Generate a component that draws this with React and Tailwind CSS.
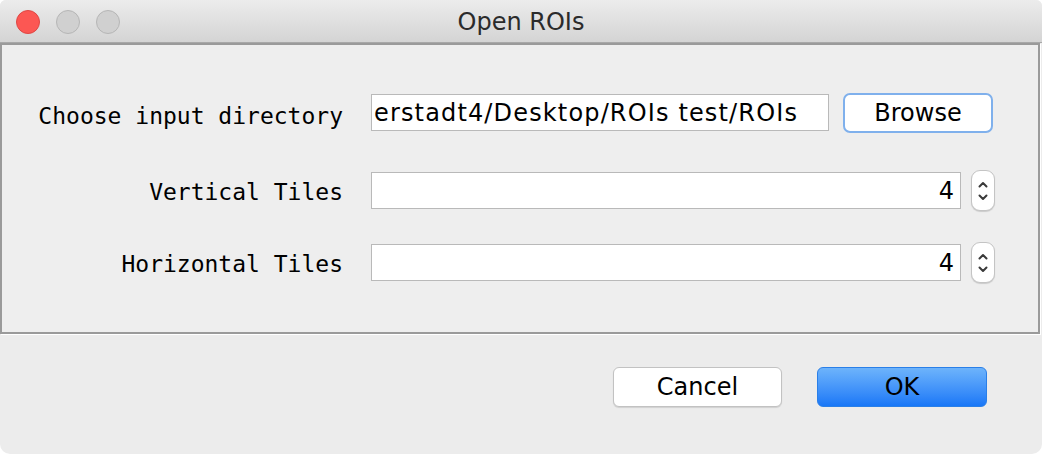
import React from 'react';

const mono = { fontFamily: '"DejaVu Sans Mono", monospace' };

// small up/down chevron stepper, like the mac spinner
function Stepper() {
  return (
    <div className="w-[24px] h-[41px] rounded-[9px] bg-white border border-[#c4c4c4] shadow-[0_1px_1px_rgba(0,0,0,0.15)] flex items-center justify-center">
      <svg width="14" height="28" viewBox="0 0 14 28" fill="none" stroke="#3a3a3a" strokeWidth="2" strokeLinecap="round" strokeLinejoin="round">
        <path d="M3.5 9.5 L7 6 L10.5 9.5" />
        <path d="M3.5 18.5 L7 22 L10.5 18.5" />
      </svg>
    </div>
  );
}

function Label({ children, shift = 'pt-[3px]' }) {
  return (
    <div className={`w-[341px] shrink-0 text-right text-[23px] text-black ${shift}`} style={mono}>
      {children}
    </div>
  );
}

function NumberRow({ label, value }) {
  return (
    <div className="flex items-center h-[41px]">
      <Label>{label}</Label>
      <div className="ml-[28px] w-[590px] h-[37px] bg-white border border-[#b9b9b9] flex items-center justify-end pr-[6px] text-[24px] text-black">
        {value}
      </div>
      <div className="ml-[10px]">
        <Stepper />
      </div>
    </div>
  );
}

export default function App() {
  return (
    <div
      className="w-[1042px] h-[454px] bg-white"
      style={{ fontFamily: '"DejaVu Sans", sans-serif' }}
    >
      <div className="w-[1042px] h-[454px] flex flex-col bg-[#ececec] rounded-t-[6px] rounded-b-[10px] overflow-hidden">
        {/* title bar */}
        <div className="h-[43px] shrink-0 flex items-center relative bg-gradient-to-b from-[#ececec] to-[#d4d4d4] border-b border-[#a8a8a8]">
          <div className="flex items-center gap-[16px] pl-[16px] pt-[1px]">
            <div className="w-[24px] h-[24px] rounded-full bg-[#fc5753] border border-[#df4744]" />
            <div className="w-[24px] h-[24px] rounded-full bg-[#d0d0d0] border border-[#b6b6b6]" />
            <div className="w-[24px] h-[24px] rounded-full bg-[#d0d0d0] border border-[#b6b6b6]" />
          </div>
          <div className="flex-1 text-center text-[24px] text-[#2b2b2b] pr-[120px] pt-[2px]">Open ROIs</div>
        </div>

        {/* etched panel */}
        <div className="w-[1040px] h-[291px] shrink-0 border-2 border-[#9a9a9a] bg-[#eeeeee] shadow-[1px_1px_0_#ffffff] flex flex-col pt-[47px]">
          <div className="flex items-center h-[41px]">
            <Label shift="pt-[8px]">Choose input directory</Label>
            <div className="ml-[28px] w-[458px] h-[37px] bg-white border border-[#b9b9b9] flex items-center pl-[2px] overflow-hidden whitespace-nowrap text-[24px] text-black tracking-[1.15px]">
              erstadt4/Desktop/ROIs test/ROIs
            </div>
            <button className="ml-[14px] w-[150px] h-[40px] bg-white rounded-[7px] border-2 border-[#7fb0ec] flex items-center justify-center text-[24px] text-black">
              Browse
            </button>
          </div>
          <div className="mt-[37px]">
            <NumberRow label="Vertical Tiles" value="4" />
          </div>
          <div className="mt-[31px]">
            <NumberRow label="Horizontal Tiles" value="4" />
          </div>
        </div>

        {/* buttons */}
        <div className="flex-1 flex justify-end items-start pt-[33px] pr-[55px] gap-[35px]">
          <button className="w-[169px] h-[40px] bg-white rounded-[6px] border border-[#c2c2c2] shadow-[0_1px_1px_rgba(0,0,0,0.12)] text-[24px] text-black flex items-center justify-center">
            Cancel
          </button>
          <button className="w-[170px] h-[40px] rounded-[6px] bg-gradient-to-b from-[#6db3fb] to-[#1877f7] border border-[#2a7fe8] text-[24px] text-black flex items-center justify-center">
            OK
          </button>
        </div>
      </div>
    </div>
  );
}
